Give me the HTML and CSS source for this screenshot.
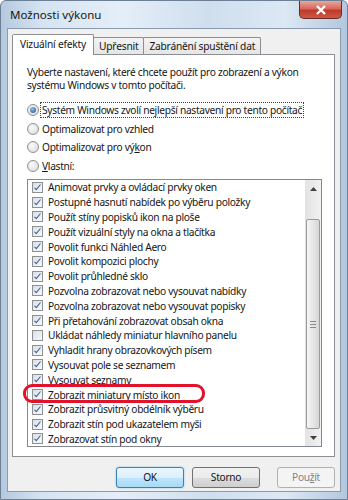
FILE: index.html
```html
<!DOCTYPE html>
<html lang="cs">
<head>
    <meta charset="UTF-8">
    <meta name="viewport" content="width=device-width, initial-scale=1.0">
    <title>Možnosti výkonu</title>
    <link rel="stylesheet" href="styles.css">
</head>
<body>
    <div class="window">
        <div class="titlebar">
            <span class="title">Možnosti výkonu</span>
            <div class="close">
                <svg width="12" height="10" viewBox="0 0 12 10">
                    <path d="M2 1 L10 9 M10 1 L2 9" stroke="#fff" stroke-width="2.4" fill="none"/>
                </svg>
            </div>
        </div>

        <div class="client">
            <div class="tabs">
                <div class="tab active">Vizuální efekty</div>
                <div class="tab">Upřesnit</div>
                <div class="tab">Zabránění spuštění dat</div>
            </div>

            <div class="panel">
                <p class="intro">Vyberte nastavení, které chcete použít pro zobrazení a výkon<br>systému Windows v tomto počítači.</p>

                <div class="radios">
                    <div class="radio checked"><span class="dot"></span><span class="focus">Systém Windows zvolí nejlepší nastavení pro tento počítač</span></div>
                    <div class="radio"><span class="dot"></span><span>Optimalizovat pro vzhled</span></div>
                    <div class="radio"><span class="dot"></span><span>Optimalizovat pro vý<u>k</u>on</span></div>
                    <div class="radio"><span class="dot"></span><span><u>V</u>lastní:</span></div>
                </div>

                <div class="listbox">
                    <ul class="items">
                        <li><span class="box on"></span>Animovat prvky a ovládací prvky oken</li>
                        <li><span class="box on"></span>Postupné hasnutí nabídek po výběru položky</li>
                        <li><span class="box on"></span>Použít stíny popisků ikon na ploše</li>
                        <li><span class="box on"></span>Použít vizuální styly na okna a tlačítka</li>
                        <li><span class="box on"></span>Povolit funkci Náhled Aero</li>
                        <li><span class="box on"></span>Povolit kompozici plochy</li>
                        <li><span class="box on"></span>Povolit průhledné sklo</li>
                        <li><span class="box on"></span>Pozvolna zobrazovat nebo vysouvat nabídky</li>
                        <li><span class="box on"></span>Pozvolna zobrazovat nebo vysouvat popisky</li>
                        <li><span class="box on"></span>Při přetahování zobrazovat obsah okna</li>
                        <li><span class="box"></span>Ukládat náhledy miniatur hlavního panelu</li>
                        <li><span class="box on"></span>Vyhladit hrany obrazovkových písem</li>
                        <li><span class="box on"></span>Vysouvat pole se seznamem</li>
                        <li><span class="box on"></span>Vysouvat seznamy</li>
                        <li><span class="box on"></span>Zobrazit miniatury místo ikon</li>
                        <li><span class="box on"></span>Zobrazit průsvitný obdélník výběru</li>
                        <li><span class="box on"></span>Zobrazit stín pod ukazatelem myši</li>
                        <li><span class="box on"></span>Zobrazovat stín pod okny</li>
                    </ul>

                    <div class="scrollbar">
                        <div class="arrow up">
                            <svg width="7" height="4" viewBox="0 0 7 4"><path d="M0 4 L3.5 0 L7 4 Z" fill="#404040"/></svg>
                        </div>
                        <div class="track">
                            <div class="thumb"><span class="grip"></span></div>
                        </div>
                        <div class="arrow down">
                            <svg width="7" height="4" viewBox="0 0 7 4"><path d="M0 0 L3.5 4 L7 0 Z" fill="#404040"/></svg>
                        </div>
                    </div>

                    <div class="mark"></div>
                </div>
            </div>

            <div class="buttons">
                <div class="btn default">OK</div>
                <div class="btn">Storno</div>
                <div class="btn disabled">Pou<u>ž</u>ít</div>
            </div>
        </div>
    </div>
</body>
</html>
```

FILE: styles.css
```css
body {
    margin: 0;
    padding: 0;
    background-color: #fff;
    font-family: "Noto Sans", "Open Sans", sans-serif;
    font-size: 10.2px;
    letter-spacing: -0.3px;
    color: #151515;
    white-space: nowrap;
}

.window {
    width: 348px;
    height: 500px;
    box-sizing: border-box;
    border: 1px solid #6d7f94;
    border-radius: 6px 6px 0 0;
    background: linear-gradient(to right, #b4c9df 0%, #d6e4f2 12%, #e4eef8 35%, #cfdeee 60%, #dce8f4 82%, #b2c7dd 100%);
    display: flex;
    flex-direction: column;
}

.titlebar {
    height: 27px;
    display: flex;
    justify-content: space-between;
    padding: 0 5px 0 9px;
}

.title {
    font-size: 11.5px;
    letter-spacing: 0;
    line-height: 28px;
}

.close {
    width: 43px;
    height: 18px;
    box-sizing: border-box;
    border: 1px solid #6b2a25;
    border-top: none;
    border-radius: 0 0 5px 5px;
    background: linear-gradient(to bottom, #e8a89c 0%, #d5695c 45%, #c0392b 55%, #c95a45 100%);
    display: flex;
    justify-content: center;
    align-items: center;
}

.client {
    flex: 1;
    margin: 0 6px 7px 6px;
    border: 1px solid #8a9bb0;
    background-color: #f0f0f0;
    padding: 5px 5px 0 4px;
    display: flex;
    flex-direction: column;
}

.tabs {
    display: flex;
    align-items: flex-end;
    height: 20px;
    padding-left: 1px;
    position: relative;
    z-index: 1;
}

.tab {
    height: 16px;
    line-height: 17px;
    padding: 0 5px;
    border: 1px solid #8c8e94;
    border-bottom: none;
    margin-right: -1px;
    background: linear-gradient(to bottom, #f3f3f3, #e5e5e5);
    border-radius: 2px 2px 0 0;
    letter-spacing: -0.2px;
}

.tab.active {
    height: 20px;
    line-height: 19px;
    padding: 0 7px;
    margin-left: -1px;
    background: #fff;
    margin-bottom: -1px;
}

.panel {
    height: 403px;
    box-sizing: border-box;
    background-color: #fff;
    border: 1px solid #8c8e94;
    padding: 11px 12px 0 14px;
}

.intro {
    margin: 0;
    line-height: 13px;
}

.radios {
    margin-top: 9px;
}

.radio {
    display: flex;
    align-items: center;
    height: 18.5px;
}

.dot {
    width: 10px;
    height: 10px;
    border: 1px solid #8f8f8f;
    border-radius: 50%;
    background: radial-gradient(circle at 40% 35%, #fafafa, #d8d8d8);
    margin-right: 2px;
    position: relative;
}

.radio.checked .dot::after {
    content: "";
    position: absolute;
    left: 2px;
    top: 2px;
    width: 6px;
    height: 6px;
    border-radius: 50%;
    background: radial-gradient(circle at 40% 35%, #8fc1e8, #1f4f8f);
}

.focus {
    outline: 1px dotted #444;
    outline-offset: 0;
    padding: 0 1px;
}

.radio span:last-child {
    padding-left: 1px;
}

.listbox {
    margin-top: 4px;
    height: 268px;
    box-sizing: border-box;
    border: 1px solid #828790;
    display: flex;
    position: relative;
}

.items {
    flex: 1;
    list-style: none;
    margin: 0;
    padding: 0 0 0 4px;
}

.items li {
    height: 14.8px;
    display: flex;
    align-items: center;
}

.box {
    width: 9px;
    height: 9px;
    border: 1px solid #8e8f8f;
    background: linear-gradient(135deg, #d6dfea, #f7f9fb);
    margin-right: 5px;
    position: relative;
    flex-shrink: 0;
}

.box.on::after {
    content: "";
    position: absolute;
    left: 3px;
    top: 0;
    width: 2px;
    height: 6px;
    border: solid #3f5b94;
    border-width: 0 1.6px 1.6px 0;
    transform: rotate(40deg);
}

.scrollbar {
    width: 16px;
    display: flex;
    flex-direction: column;
    background: linear-gradient(to right, #e2e2e2, #f1f1f1);
}

.arrow {
    height: 17px;
    display: flex;
    justify-content: center;
    align-items: center;
}

.track {
    flex: 1;
    display: flex;
    flex-direction: column;
    justify-content: flex-end;
}

.thumb {
    height: 208px;
    margin: 0 1px;
    border: 1px solid #9a9a9a;
    border-radius: 2px;
    background: linear-gradient(to right, #f6f6f6, #e6e6e6 50%, #d6d6d6);
    display: flex;
    justify-content: center;
    align-items: center;
}

.grip {
    width: 6px;
    height: 5px;
    border-top: 1px solid #8a8a8a;
    border-bottom: 1px solid #8a8a8a;
    background: linear-gradient(to bottom, transparent 2px, #8a8a8a 2px, #8a8a8a 3px, transparent 3px);
}

.mark {
    position: absolute;
    left: -5px;
    top: 204px;
    width: 176px;
    height: 13px;
    border: 3px solid #e2122b;
    border-radius: 9px;
}

.buttons {
    display: flex;
    justify-content: flex-end;
    margin-top: 10px;
}

.btn {
    width: 66px;
    height: 19px;
    line-height: 19px;
    text-align: center;
    border: 1px solid #707070;
    border-radius: 3px;
    background: linear-gradient(to bottom, #f2f2f2 0%, #ebebeb 50%, #dddddd 51%, #cfcfcf 100%);
}

.btn.default {
    border-color: #3c7fb1;
    background: linear-gradient(to bottom, #eaf6fd 0%, #d9f0fc 50%, #bee6fd 51%, #a7d9f5 100%);
    box-shadow: 0 0 2px #7ec4ea;
    margin-right: 8px;
}

.btn.disabled {
    width: 56px;
    border-color: #adb2b5;
    background: #f4f4f4;
    color: #838383;
    margin-left: 17px;
}
```
